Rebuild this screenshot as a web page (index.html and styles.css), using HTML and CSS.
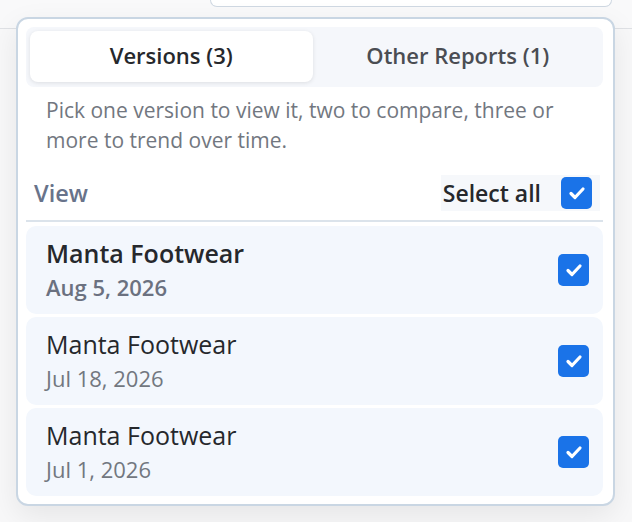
FILE: index.html
```html
<!DOCTYPE html>
<html lang="en">
<head>
    <meta charset="UTF-8">
    <meta name="viewport" content="width=device-width, initial-scale=1.0">
    <title>Versions</title>
    <link rel="stylesheet" href="styles.css">
</head>
<body>
    <div class="topbar">
        <div class="topbox"></div>
    </div>
    <div class="panel">
        <div class="tabs">
            <button class="tab active">Versions (3)</button>
            <button class="tab">Other Reports (1)</button>
        </div>
        <p class="hint">Pick one version to view it, two to compare, three or more to trend over time.</p>
        <div class="list-head">
            <span class="view-label">View</span>
            <label class="select-all">
                <span>Select all</span>
                <span class="check">
                    <svg viewBox="0 0 20 20" width="20" height="20"><path d="M4 10.5l4 4 8-8.5" fill="none" stroke="#fff" stroke-width="3.2" stroke-linecap="round" stroke-linejoin="round"/></svg>
                </span>
            </label>
        </div>
        <div class="rows">
            <div class="row current">
                <div class="info">
                    <div class="name">Manta Footwear</div>
                    <div class="date">Aug 5, 2026</div>
                </div>
                <span class="check">
                    <svg viewBox="0 0 20 20" width="20" height="20"><path d="M4 10.5l4 4 8-8.5" fill="none" stroke="#fff" stroke-width="3.2" stroke-linecap="round" stroke-linejoin="round"/></svg>
                </span>
            </div>
            <div class="row">
                <div class="info">
                    <div class="name">Manta Footwear</div>
                    <div class="date">Jul 18, 2026</div>
                </div>
                <span class="check">
                    <svg viewBox="0 0 20 20" width="20" height="20"><path d="M4 10.5l4 4 8-8.5" fill="none" stroke="#fff" stroke-width="3.2" stroke-linecap="round" stroke-linejoin="round"/></svg>
                </span>
            </div>
            <div class="row">
                <div class="info">
                    <div class="name">Manta Footwear</div>
                    <div class="date">Jul 1, 2026</div>
                </div>
                <span class="check">
                    <svg viewBox="0 0 20 20" width="20" height="20"><path d="M4 10.5l4 4 8-8.5" fill="none" stroke="#fff" stroke-width="3.2" stroke-linecap="round" stroke-linejoin="round"/></svg>
                </span>
            </div>
        </div>
    </div>
</body>
</html>
```

FILE: styles.css
```css
* {
    box-sizing: border-box;
}
body {
    margin: 0;
    font-family: "Open Sans", Lato, sans-serif;
    background-color: #f8f8f9;
    color: #26282c;
    height: 522px;
    overflow: hidden;
    position: relative;
}
.topbar {
    height: 29px;
    border-bottom: 1px solid #dfe1e5;
    background-color: #f9f9fa;
}
.topbox {
    margin-left: 210px;
    width: 402px;
    height: 7px;
    background-color: #fff;
    border: 1px solid #cfd8e2;
    border-top: none;
    border-radius: 0 0 8px 8px;
}
.panel {
    position: absolute;
    top: 17px;
    left: 16px;
    width: 599px;
    height: 489px;
    background-color: #fff;
    border: 2px solid #c9d6e3;
    border-radius: 12px;
    padding: 8px 10px 8px 8px;
    box-shadow: 0 10px 30px rgba(0, 0, 0, 0.08);
}
.tabs {
    display: flex;
    background-color: #f5f7fb;
    border-radius: 8px;
    padding: 4px 4px 5px;
    gap: 4px;
}
.tab {
    flex: 1;
    height: 51px;
    padding: 0 0 3px;
    border: none;
    background: transparent;
    border-radius: 8px;
    font-family: inherit;
    font-size: 22px;
    font-weight: 600;
    color: #4a4d53;
    cursor: pointer;
}
.tab.active {
    background-color: #fff;
    color: #26282c;
    box-shadow: 0 1px 4px rgba(0, 0, 0, 0.1);
}
.hint {
    margin: 8px 14px 0 20px;
    font-size: 21px;
    line-height: 30px;
    color: #727780;
}
.list-head {
    display: flex;
    justify-content: space-between;
    align-items: center;
    margin-top: 20px;
    padding: 0 3px 9px 8px;
    border-bottom: 2px solid #dbe3eb;
}
.view-label {
    font-size: 23.5px;
    font-weight: 600;
    color: #68738a;
}
.select-all {
    display: flex;
    align-items: center;
    gap: 20px;
    background-color: #f6f8fb;
    padding: 2px 8px 2px 2px;
    font-size: 23px;
    font-weight: 600;
    color: #26282c;
}
.check {
    width: 31px;
    height: 32px;
    border-radius: 5px;
    background-color: #1a73e8;
    display: flex;
    align-items: center;
    justify-content: center;
}
.rows {
    display: flex;
    flex-direction: column;
    gap: 3px;
    margin-top: 4px;
}
.row {
    display: flex;
    align-items: center;
    justify-content: space-between;
    height: 88px;
    padding: 0 14px 0 20px;
    background-color: #f3f7fd;
    border-radius: 10px;
}
.name {
    font-size: 25px;
    line-height: 32px;
}
.date {
    margin-top: 2px;
    font-size: 22px;
    line-height: 32px;
    color: #727780;
}
.row.current .name {
    font-weight: 600;
}
.row.current .date {
    font-weight: 600;
    color: #6b7180;
}
```
